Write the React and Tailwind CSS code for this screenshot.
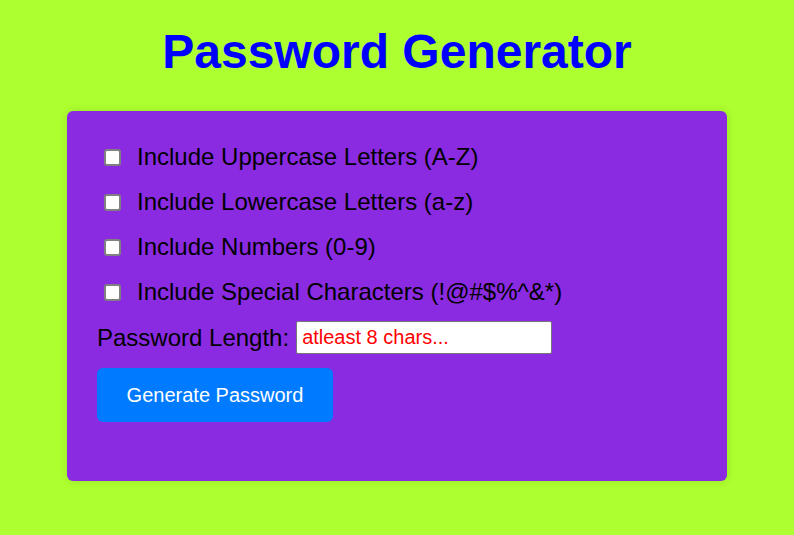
import { useState } from 'react'

const OPTIONS = [
  { id: 'upper', label: 'Include Uppercase Letters (A-Z)' },
  { id: 'lower', label: 'Include Lowercase Letters (a-z)' },
  { id: 'numbers', label: 'Include Numbers (0-9)' },
  { id: 'special', label: 'Include Special Characters (!@#$%^&*)' }
]

export default function App() {
  const [checked, setChecked] = useState({})
  const [length, setLength] = useState('')

  return (
    <div className="min-h-screen w-full bg-[#adff2f] flex flex-col items-center"
      style={{ fontFamily: '"Liberation Sans", Arial, sans-serif' }}>
      <h1 className="mt-[24px] text-[48px] leading-[56px] font-bold text-[#0000ff]">Password Generator</h1>

      <div className="mt-[31px] w-[660px] rounded-[6px] bg-[#8a2be2] pt-[32px] pb-[59px] px-[30px] shadow-[0_0_8px_rgba(0,0,0,0.12)]">
        <div className="flex flex-col gap-[17px]">
          {OPTIONS.map(o => (
            <label key={o.id} className="flex items-center h-[28px] text-[24px] leading-[28px] text-black">
              <span className="ml-[7px] mr-[16px] flex items-center">
                <input type="checkbox" checked={!!checked[o.id]}
                  onChange={e => setChecked({ ...checked, [o.id]: e.target.checked })}
                  className="appearance-none block w-[17px] h-[17px] bg-white border-2 border-[#808080] rounded-[3px] checked:bg-[#0075ff] checked:border-[#0075ff]" />
              </span>
              {o.label}
            </label>
          ))}
        </div>

        <div className="mt-[15px] flex items-center h-[33px]">
          <span className="text-[24px] leading-[28px] text-black mr-[7px]">Password Length:</span>
          <input type="text" value={length} onChange={e => setLength(e.target.value)}
            placeholder="atleast 8 chars..."
            className="w-[256px] h-[33px] bg-white border border-[#767676] rounded-[2px] px-[5px] text-[20px] text-[#ff0000] placeholder:text-[#ff0000] outline-none" />
        </div>

        <button className="mt-[14px] w-[236px] h-[54px] rounded-[6px] bg-[#007bff] text-white text-[20px]">
          Generate Password
        </button>
      </div>
    </div>
  )
}
